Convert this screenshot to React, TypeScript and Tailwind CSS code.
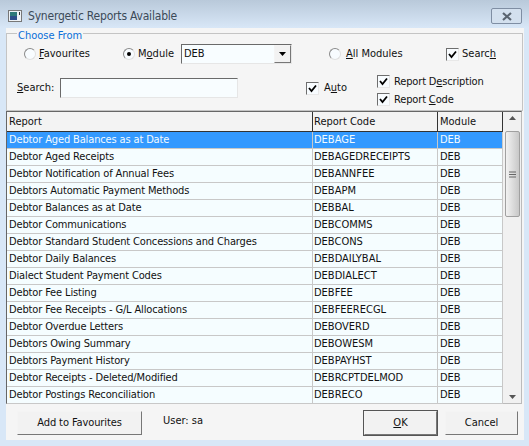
const rows: [string, string][] = [
  ["Debtor Aged Balances as at Date", "DEBAGE"],
  ["Debtor Aged Receipts", "DEBAGEDRECEIPTS"],
  ["Debtor Notification of Annual Fees", "DEBANNFEE"],
  ["Debtors Automatic Payment Methods", "DEBAPM"],
  ["Debtor Balances as at Date", "DEBBAL"],
  ["Debtor Communications", "DEBCOMMS"],
  ["Debtor Standard Student Concessions and Charges", "DEBCONS"],
  ["Debtor Daily Balances", "DEBDAILYBAL"],
  ["Dialect Student Payment Codes", "DEBDIALECT"],
  ["Debtor Fee Listing", "DEBFEE"],
  ["Debtor Fee Receipts - G/L Allocations", "DEBFEERECGL"],
  ["Debtor Overdue Letters", "DEBOVERD"],
  ["Debtors Owing Summary", "DEBOWESM"],
  ["Debtors Payment History", "DEBPAYHST"],
  ["Debtor Receipts - Deleted/Modified", "DEBRCPTDELMOD"],
  ["Debtor Postings Reconciliation", "DEBRECO"],
];

function Radio({ on }: { on?: boolean }) {
  return (
    <span className="flex h-[12px] w-[12px] shrink-0 items-center justify-center rounded-full border border-t-[#8a8a8a] border-l-[#8a8a8a] border-r-[#e0e0e0] border-b-[#e0e0e0] bg-[#f8fcff]">
      {on && <span className="h-[4px] w-[4px] rounded-full bg-black" />}
    </span>
  );
}

function Check() {
  return (
    <span className="flex h-[13px] w-[13px] shrink-0 items-center justify-center border border-t-[#6e6e6e] border-l-[#6e6e6e] border-r-[#e8e8e8] border-b-[#e8e8e8] bg-[#f8fcff]">
      <svg width="9" height="9" viewBox="0 0 9 9">
        <path d="M1 4 L3.5 7 L8 1.5" fill="none" stroke="#000" strokeWidth="1.8" />
      </svg>
    </span>
  );
}

function Btn({ children, w, dark }: { children: React.ReactNode; w: string; dark?: boolean }) {
  return (
    <div
      className={`flex h-[24px] items-center justify-center border border-t-[#f4f4f4] border-l-[#f4f4f4] border-r-[#777] border-b-[#777] bg-[#f2f2f2] ${w} ${dark ? "outline outline-1 outline-[#555]" : ""}`}
    >
      {children}
    </div>
  );
}

export default function App() {
  return (
    <div className="flex h-[446px] w-[529px] flex-col overflow-hidden bg-[#d8e7f7] text-[11px] leading-[14px] text-[#111] [font-family:'DejaVu_Sans_Condensed','DejaVu_Sans',sans-serif]">
      <div className="flex h-[28px] shrink-0 items-center bg-gradient-to-b from-[#b9c9da] to-[#d8e7f7] pl-[8px] pr-[7px] pt-[4px]">
        <svg width="14" height="12" viewBox="0 0 14 12" className="shrink-0">
          <rect x="0.5" y="0.5" width="13" height="11" fill="#eef2f6" stroke="#777" />
          <rect x="2" y="2" width="7" height="8" fill="#2f7a7a" />
          <rect x="2" y="6" width="7" height="4" fill="#2f4f8a" />
          <rect x="11" y="2" width="1" height="3" fill="#333" />
        </svg>
        <span className="ml-[6px] text-[12px] tracking-[-0.2px] text-[#3c4a58]">Synergetic Reports Available</span>
        <div className="ml-auto flex h-[16px] w-[31px] items-center justify-center rounded-[2px] border border-[#7f8ea3] bg-[#d3e0ee]">
          <svg width="12" height="9" viewBox="0 0 12 9">
            <path d="M2 1 L10 8 M10 1 L2 8" stroke="#5a6470" strokeWidth="2.2" />
          </svg>
        </div>
      </div>

      <div className="mb-[6px] ml-[6px] flex w-[518px] flex-1 flex-col bg-[#f5f5f5]">
        <div className="relative mt-[5px] h-[78px] w-[517px] border border-[#c4c4c4]">
          <span className="absolute left-[10px] top-[-5px] bg-[#f5f5f5] px-[1px] text-[#0a6fd8]">Choose From</span>
          <div className="flex h-[40px] items-center">
            <div className="flex w-[116px] items-center pl-[17px]">
              <Radio />
              <span className="ml-[3px]"><u>F</u>avourites</span>
            </div>
            <div className="flex w-[58px] items-center">
              <Radio on />
              <span className="ml-[3px]">M<u>o</u>dule</span>
            </div>
            <div className="flex h-[20px] w-[111px] items-center border border-t-[#6a6a6a] border-l-[#6a6a6a] border-r-[#e6e6e6] border-b-[#e6e6e6] bg-[#f8fdff] pl-[2px]">
              DEB
              <span className="ml-auto flex h-[18px] w-[17px] items-center justify-center border border-t-[#f4f4f4] border-l-[#f4f4f4] border-r-[#777] border-b-[#777] bg-[#f2f2f2]">
                <svg width="7" height="4" viewBox="0 0 7 4"><path d="M0 0H7L3.5 4Z" fill="#000" /></svg>
              </span>
            </div>
            <div className="ml-[37px] flex w-[117px] items-center">
              <Radio />
              <span className="ml-[5px]"><u>A</u>ll Modules</span>
            </div>
            <div className="flex items-center">
              <Check />
              <span className="mb-[1px] ml-[3px]">Searc<u>h</u></span>
            </div>
          </div>
          <div className="flex h-[32px] items-center">
            <span className="mb-[4px] ml-[10px] w-[43px]"><u>S</u>earch:</span>
            <div className="mb-[4px] h-[20px] w-[178px] border border-t-[#6a6a6a] border-l-[#6a6a6a] border-r-[#e6e6e6] border-b-[#e6e6e6] bg-[#f8fdff]" />
            <div className="mb-[4px] ml-[68px] flex w-[71px] items-center">
              <Check />
              <span className="ml-[5px]">A<u>u</u>to</span>
            </div>
            <div className="mt-[1px] flex flex-col gap-[4px]">
              <div className="flex items-center">
                <Check />
                <span className="ml-[4px] tracking-[-0.15px]">Report D<u>e</u>scription</span>
              </div>
              <div className="flex items-center">
                <Check />
                <span className="ml-[4px] tracking-[-0.15px]">Report <u>C</u>ode</span>
              </div>
            </div>
          </div>
        </div>

        <div className="flex h-[293px] w-[516px] border border-[#666] border-r-[#bbb] border-b-[#bbb]">
          <div className="w-[496px] shrink-0">
            <div className="flex h-[20px] border-b border-[#333] bg-[#f3f3f3]">
              <div className="flex w-[306px] items-center border-r border-[#333] pl-[2px]">Report</div>
              <div className="flex w-[125px] items-center border-r border-[#333] pl-[1px]">Report Code</div>
              <div className="flex w-[65px] items-center border-r border-[#333] pl-[2px]">Module</div>
            </div>
            {rows.map(([name, code], i) => (
              <div
                key={code}
                className={`flex h-[17px] border-b border-[#c8c8c8] ${i === 0 ? "bg-[#3399ff] text-[#f4fbff]" : "bg-[#f5fdff] text-[#111]"}`}
              >
                <div className="flex w-[306px] items-center border-r border-[#c8c8c8] pl-[2px] tracking-[-0.14px]">{name}</div>
                <div className="flex w-[125px] items-center border-r border-[#c8c8c8] pl-[1px]">{code}</div>
                <div className="flex w-[65px] items-center border-r border-[#c8c8c8] pl-[2px]">DEB</div>
              </div>
            ))}
          </div>
          <div className="flex flex-1 flex-col items-center bg-[#f1f1f1] py-[3px]">
            <svg width="7" height="4" viewBox="0 0 7 4" className="mt-[1px]"><path d="M3.5 0L7 4H0Z" fill="#555" /></svg>
            <div className="mt-[11px] flex h-[86px] w-[15px] items-center justify-center rounded-[2px] border border-[#a0a0a0] bg-gradient-to-r from-[#f2f2f2] to-[#c8c8c8]">
              <svg width="7" height="7" viewBox="0 0 7 7"><path d="M0 1H7M0 3.5H7M0 6H7" stroke="#666" /></svg>
            </div>
            <svg className="mb-[1px] mt-auto" width="7" height="4" viewBox="0 0 7 4"><path d="M0 0H7L3.5 4Z" fill="#555" /></svg>
          </div>
        </div>

        <div className="flex flex-1 items-center pl-[11px] pt-[1px]">
          <Btn w="w-[125px]"><span className="tracking-[-0.1px]">Add to Favourites</span></Btn>
          <span className="mb-[4px] ml-[21px]">User: sa</span>
          <div className="ml-auto mr-[6px] flex gap-[8px]">
            <Btn w="w-[73px]" dark><span><u>O</u>K</span></Btn>
            <Btn w="w-[73px]">Cancel</Btn>
          </div>
        </div>
      </div>
    </div>
  );
}
